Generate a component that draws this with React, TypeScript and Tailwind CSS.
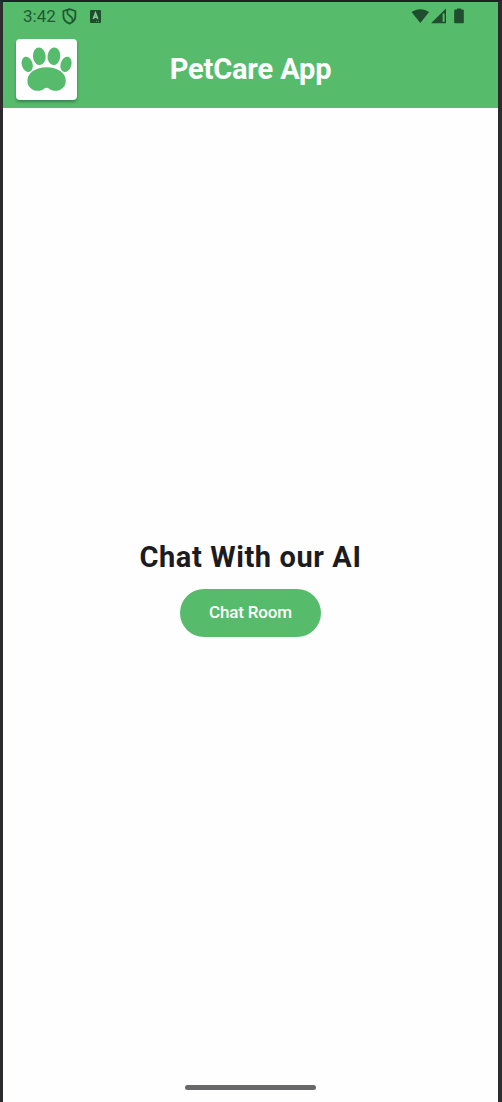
function ShieldIcon() {
  return (
    <svg className="ml-[6px] h-[17px] w-[15px]" viewBox="0 0 15 17" fill="none" stroke="#235832" strokeWidth="1.8">
      <path d="M7.5 1.1 13.4 3v5c0 3.4-2.2 6.2-5.9 7.7C3.8 14.2 1.4 11.4 1.4 8V3Z" strokeLinejoin="round" />
      <path d="M5.4 2v3.2c0 2.2 5.1 3.2 5.1 6v2.2" />
    </svg>
  );
}

function KeyboardIcon() {
  return (
    <svg className="ml-[13px] h-[13px] w-[11px]" viewBox="0 0 11 13">
      <rect width="11" height="13" rx="1" fill="#1f4d2d" />
      <path d="M3.2 9 5.5 3 7.8 9M4 7.1h3" fill="none" stroke="#7fcb91" strokeWidth="1.6" />
      <path d="M6 11.3h1M8 11.3h1" stroke="#57bb6c" strokeWidth=".8" />
    </svg>
  );
}

function SystemIcons() {
  return (
    <svg className="h-[18px] w-[54px]" viewBox="0 0 54 18" fill="#1f4d2d">
      <path d="M.5 5.1C5.6 1.2 13 1.2 18.1 5.1L9.3 15.9Z" />
      <path d="M20 16.2 35 1.4v14.8Z" />
      <path d="M31.6 6.5h2v8.3h-2Z" fill="#57bb6c" />
      <path d="M46 2.6V1.4h4v1.2h1.9c.6 0 .9.4.9.9v11.8c0 .6-.4 1-.9 1h-7.8c-.6 0-.9-.4-.9-1V3.5c0-.5.4-.9.9-.9Z" />
    </svg>
  );
}

function PawLogo() {
  return (
    <div className="flex h-[61px] w-[61px] items-center justify-center rounded-[4px] bg-[#fefefe] shadow-[0_2px_3px_rgba(0,0,0,0.3)]">
      <svg className="h-[61px] w-[61px]" viewBox="0 0 61 61" fill="#57bb6c">
        <ellipse cx="23.3" cy="17.3" rx="6.4" ry="8.8" transform="rotate(-5 23.3 17.3)" />
        <ellipse cx="37.9" cy="17.3" rx="6.4" ry="8.8" transform="rotate(5 37.9 17.3)" />
        <ellipse cx="11.2" cy="25.3" rx="5.4" ry="7.8" transform="rotate(-17 11.2 25.3)" />
        <ellipse cx="50" cy="25.3" rx="5.4" ry="7.8" transform="rotate(17 50 25.3)" />
        <path d="M30.6 28.3c-10.8 0-19.2 5.6-19.2 13.4 0 6.2 4.8 10.1 10.6 10.1 2.4 0 4.3-.6 6-2 1.6-1.3 3.6-1.3 5.2 0 1.7 1.4 3.6 2 6 2 5.8 0 10.6-3.9 10.6-10.1 0-7.8-8.4-13.4-19.2-13.4Z" />
      </svg>
    </div>
  );
}

export default function App() {
  return (
    <div className="flex h-[1102px] w-[502px] flex-col border-t-2 border-r-4 border-l-[3px] border-t-[#202124] border-r-[#2c2b2e] border-l-[#2c2b2e] bg-[#fefefe] font-['Roboto',sans-serif]">
      <header className="h-[106px] shrink-0 bg-[#57bb6c]">
        <div className="flex h-[28px] items-center pr-[33px] pl-[20px] text-[#235832]">
          <span className="w-[33px] text-[17px] leading-[28px] whitespace-nowrap">3:42</span>
          <ShieldIcon />
          <KeyboardIcon />
          <div className="ml-auto">
            <SystemIcons />
          </div>
        </div>
        <div className="grid grid-cols-[61px_1fr_61px] px-[13px] pt-[9px]">
          <PawLogo />
          <h1 className="text-center text-[29px] leading-[60px] font-bold tracking-[-0.15px] whitespace-nowrap text-white">PetCare App</h1>
        </div>
      </header>
      <main className="flex flex-1 flex-col items-center justify-center pb-[18px]">
        <h2 className="text-[29px] leading-[38px] font-[670] tracking-[0.6px] whitespace-nowrap text-[#1b1b20]">Chat With our AI</h2>
        <button className="mt-[13px] h-[48px] w-[141px] rounded-full bg-[#57bb6c] text-[17px] font-medium tracking-[-0.17px] text-white">
          Chat Room
        </button>
      </main>
      <div className="mb-[12px] h-[5px] w-[131px] shrink-0 self-center rounded-full bg-[#68686a]" />
    </div>
  );
}
